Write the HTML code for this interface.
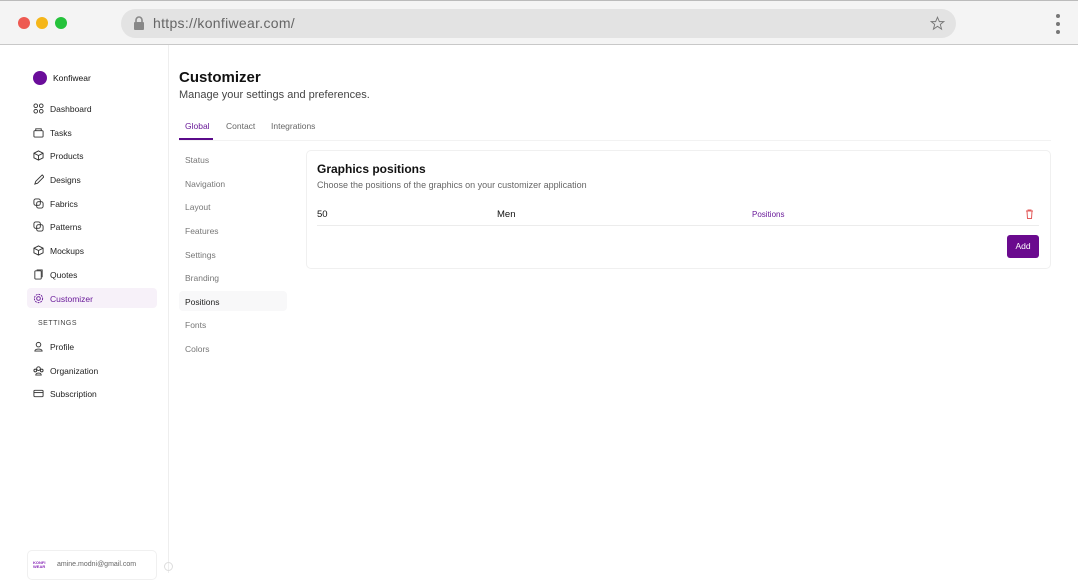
<!DOCTYPE html>
<html><head><meta charset="utf-8"><style>
*{margin:0;padding:0;box-sizing:border-box}
body{width:1078px;height:573px;overflow:hidden;background:#fff;font-family:"Liberation Sans",sans-serif;position:relative;color:#111}
.top{position:absolute;left:0;top:0;width:1078px;height:45px;background:#f4f4f4;border-bottom:1px solid #c8c8c8;border-top:1px solid #bbb}
.dot{position:absolute;top:16px;width:12px;height:12px;border-radius:50%}
.url{position:absolute;left:121px;top:8px;width:835px;height:29px;background:#e3e3e3;border-radius:15px}
.url span{position:absolute;left:32px;top:6px;font-size:14px;color:#666;letter-spacing:.3px}
.abs{position:absolute}
.nav{position:absolute;left:33px;font-size:8.5px;color:#222;display:flex;align-items:center}
.nav svg{width:11px;height:11px;margin-right:6px}
.sub{position:absolute;left:185px;font-size:8.5px;color:#777}
</style></head><body>
<div class="top">
<div class="dot" style="left:18px;background:#ee5a52"></div>
<div class="dot" style="left:36px;background:#f5b619"></div>
<div class="dot" style="left:55px;background:#25c23b"></div>
<div class="url"><svg class="abs" style="left:12px;top:7px" width="12" height="14" viewBox="0 0 12 14"><rect x="1" y="6" width="10" height="8" rx="1" fill="#888"/><path d="M3 6V4a3 3 0 0 1 6 0v2" stroke="#888" stroke-width="1.6" fill="none"/></svg><span>https://konfiwear.com/</span>
<svg class="abs" style="left:809px;top:7px" width="15" height="15" viewBox="0 0 24 24"><path d="M12 2l3 7h7l-5.5 4.5 2 7.5L12 16.5 5.5 21l2-7.5L2 9h7z" fill="none" stroke="#777" stroke-width="1.5"/></svg></div>
<div class="abs" style="left:1056px;top:13px;width:4px;height:4px;border-radius:50%;background:#777"></div>
<div class="abs" style="left:1056px;top:21px;width:4px;height:4px;border-radius:50%;background:#777"></div>
<div class="abs" style="left:1056px;top:29px;width:4px;height:4px;border-radius:50%;background:#777"></div>
</div>
<div class="abs" style="left:168px;top:45px;width:1px;height:528px;background:#eee"></div>
<div class="abs" style="left:33px;top:71px;width:14px;height:14px;border-radius:50%;background:#6a0d9a"></div>
<div class="abs" style="left:53px;top:73px;font-size:8.5px">Konfiwear</div>
<div class="nav" style="top:103px"><svg viewBox="0 0 12 12" fill="none" stroke="#333"><circle cx="3" cy="3" r="2"/><circle cx="9" cy="3" r="2"/><circle cx="3" cy="9" r="2"/><circle cx="9" cy="9" r="2"/></svg>Dashboard</div>
<div class="nav" style="top:127px"><svg viewBox="0 0 12 12" fill="none" stroke="#333"><rect x="1" y="4" width="10" height="7" rx="1"/><path d="M3 4V2h6v2"/></svg>Tasks</div>
<div class="nav" style="top:150px"><svg viewBox="0 0 12 12" fill="none" stroke="#333"><path d="M6 1l5 2.5v5L6 11 1 8.5v-5zM1 3.5L6 6l5-2.5M6 6v5"/></svg>Products</div>
<div class="nav" style="top:174px"><svg viewBox="0 0 12 12" fill="none" stroke="#333"><path d="M10 1L3 8l-1 3 3-1 7-7z"/></svg>Designs</div>
<div class="nav" style="top:198px"><svg viewBox="0 0 12 12" fill="none" stroke="#333"><rect x="1" y="1" width="7" height="7" rx="2"/><rect x="4" y="4" width="7" height="7" rx="2"/></svg>Fabrics</div>
<div class="nav" style="top:221px"><svg viewBox="0 0 12 12" fill="none" stroke="#333"><rect x="1" y="1" width="7" height="7" rx="2"/><rect x="4" y="4" width="7" height="7" rx="2"/></svg>Patterns</div>
<div class="nav" style="top:245px"><svg viewBox="0 0 12 12" fill="none" stroke="#333"><path d="M6 1l5 2.5v5L6 11 1 8.5v-5zM1 3.5L6 6l5-2.5M6 6v5"/></svg>Mockups</div>
<div class="nav" style="top:269px"><svg viewBox="0 0 12 12" fill="none" stroke="#333"><rect x="2" y="2" width="7" height="9" rx="1"/><path d="M4 1h6v8"/></svg>Quotes</div>
<div class="abs" style="left:27px;top:288px;width:130px;height:20px;background:#f7f1f9;border-radius:4px"></div>
<div class="nav" style="top:293px;color:#6a1b9a"><svg viewBox="0 0 12 12" fill="none" stroke="#6a1b9a"><circle cx="6" cy="6" r="2"/><circle cx="6" cy="6" r="4.5" stroke-dasharray="2 1"/></svg>Customizer</div>
<div class="abs" style="left:38px;top:320px;font-size:7px;color:#444;letter-spacing:.5px">SETTINGS</div>
<div class="nav" style="top:341px"><svg viewBox="0 0 12 12" fill="none" stroke="#333"><circle cx="6" cy="4" r="2.5"/><path d="M2 11c0-3 8-3 8 0z"/></svg>Profile</div>
<div class="nav" style="top:365px"><svg viewBox="0 0 12 12" fill="none" stroke="#333"><circle cx="6" cy="4" r="2"/><circle cx="2.5" cy="6" r="1.5"/><circle cx="9.5" cy="6" r="1.5"/><path d="M3 11c0-3 6-3 6 0z"/></svg>Organization</div>
<div class="nav" style="top:388px"><svg viewBox="0 0 12 12" fill="none" stroke="#333"><rect x="1" y="2.5" width="10" height="7" rx="1"/><path d="M1 5h10"/></svg>Subscription</div>
<div class="abs" style="left:27px;top:550px;width:130px;height:30px;border:1px solid #f0f0f0;border-radius:5px"></div>
<div class="abs" style="left:33px;top:561px;font-size:4px;line-height:4px;color:#8a2ab8;font-weight:bold">KONFI<br>WEAR</div>
<div class="abs" style="left:57px;top:561px;font-size:7px;color:#666">amine.modni@gmail.com</div>
<div class="abs" style="left:164px;top:562px;width:9px;height:9px;border:1px solid #ddd;border-radius:50%"></div>

<div class="abs" style="left:179px;top:69px;font-size:15px;font-weight:bold">Customizer</div>
<div class="abs" style="left:179px;top:89px;font-size:11px;color:#444">Manage your settings and preferences.</div>
<div class="abs" style="left:185px;top:121px;font-size:8.5px;color:#6a1b9a">Global</div>
<div class="abs" style="left:226px;top:121px;font-size:8.5px;color:#666">Contact</div>
<div class="abs" style="left:271px;top:121px;font-size:8.5px;color:#666">Integrations</div>
<div class="abs" style="left:179px;top:138px;width:34px;height:2px;background:#5a0a8a"></div>
<div class="abs" style="left:179px;top:140px;width:872px;height:1px;background:#f2f2f2"></div>
<div class="sub" style="top:155px">Status</div>
<div class="sub" style="top:179px">Navigation</div>
<div class="sub" style="top:202px">Layout</div>
<div class="sub" style="top:226px">Features</div>
<div class="sub" style="top:250px">Settings</div>
<div class="sub" style="top:273px">Branding</div>
<div class="abs" style="left:179px;top:291px;width:108px;height:20px;background:#f8f8f9;border-radius:4px"></div>
<div class="sub" style="top:297px;color:#222">Positions</div>
<div class="sub" style="top:320px">Fonts</div>
<div class="sub" style="top:344px">Colors</div>

<div class="abs" style="left:306px;top:150px;width:745px;height:119px;border:1px solid #f0f0f0;border-radius:5px"></div>
<div class="abs" style="left:317px;top:162px;font-size:12px;font-weight:bold;color:#111">Graphics positions</div>
<div class="abs" style="left:317px;top:180px;font-size:9px;color:#666">Choose the positions of the graphics on your customizer application</div>
<div class="abs" style="left:317px;top:209px;font-size:9.5px">50</div>
<div class="abs" style="left:497px;top:209px;font-size:9.5px">Men</div>
<div class="abs" style="left:752px;top:210px;font-size:8px;color:#6a1b9a">Positions</div>
<svg class="abs" style="left:1025px;top:209px" width="9" height="10" viewBox="0 0 9 10" fill="none" stroke="#e35a5a"><path d="M1 2h7M3 2V1h3v1M2 2l.5 7.5h4L7 2"/></svg>
<div class="abs" style="left:317px;top:225px;width:722px;height:1px;background:#ececec"></div>
<div class="abs" style="left:1007px;top:235px;width:32px;height:23px;background:#6a0a8e;border-radius:3px;color:#fff;font-size:8.5px;text-align:center;line-height:23px">Add</div>
</body></html>
